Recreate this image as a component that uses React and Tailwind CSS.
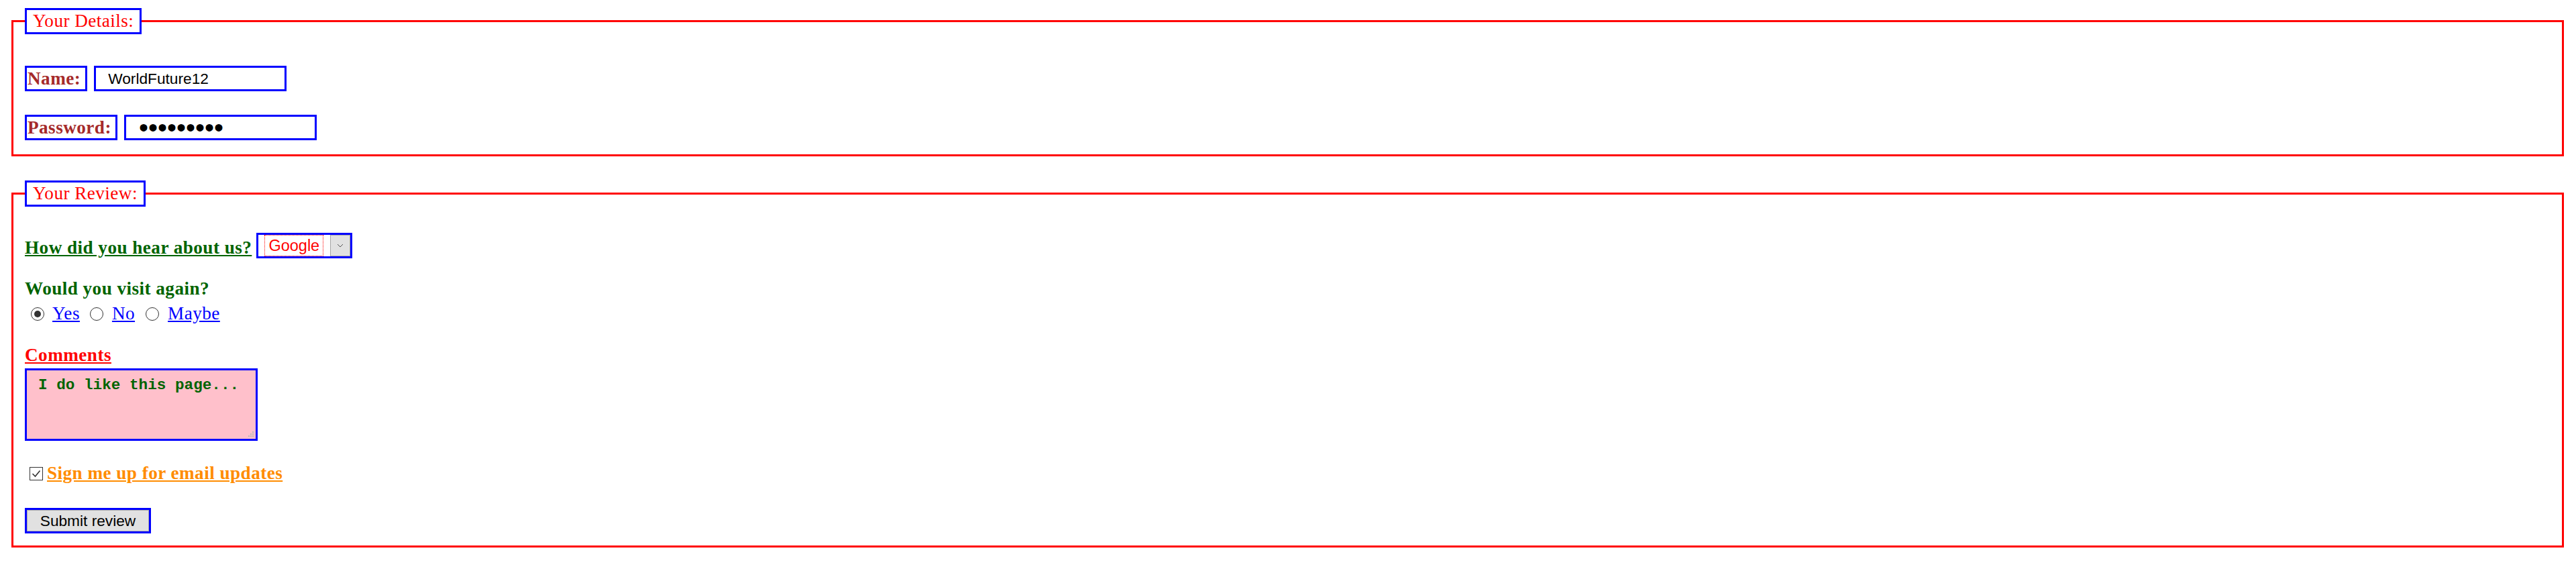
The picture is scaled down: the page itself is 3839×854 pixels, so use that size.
import React from 'react';

const sans = "font-['Liberation_Sans',Arial,sans-serif] tracking-normal";

const Radio = ({ checked }) => (
    <span className="flex h-[20px] w-[20px] shrink-0 items-center justify-center rounded-full border border-[#333333] bg-white">
        {checked && <span className="h-[10px] w-[10px] rounded-full bg-[#333333]" />}
    </span>
);

export default function App() {
    return (
        <div className="min-h-screen bg-white pt-[12px] pl-[17px] pr-[18px] font-['Liberation_Serif','Times_New_Roman',serif] text-[27.2px] leading-[31px] tracking-[0.45px] text-black">

            {/* Your Details */}
            <fieldset className="border-[3px] border-[#ff0000] px-[17px] pb-[21px]">
                <legend className="border-[3px] border-[#0000ff] px-[9px] leading-[33px] text-[#ff0000]">Your Details:</legend>

                <div className="mt-[47px] flex h-[38px]">
                    <label className="flex items-center border-[3px] border-[#0000ff] pl-[1px] pr-[7px] font-bold text-[#a52a2a]">Name:</label>
                    <input
                        type="text"
                        defaultValue="WorldFuture12"
                        className={`ml-[10px] h-[38px] w-[287px] border-[3px] border-[#0000ff] bg-white pl-[18px] text-[22.7px] text-black outline-none ${sans}`}
                    />
                </div>

                <div className="mt-[35px] flex h-[38px]">
                    <label className="flex items-center border-[3px] border-[#0000ff] pl-[1px] pr-[6px] font-bold text-[#a52a2a]">Password:</label>
                    <input
                        type="password"
                        defaultValue="secretpwd"
                        className={`ml-[10px] h-[38px] w-[287px] border-[3px] border-[#0000ff] bg-white pl-[19px] text-[40px] leading-[32px] text-black outline-none ${sans}`}
                    />
                </div>
            </fieldset>

            {/* Your Review */}
            <fieldset className="mt-[36px] border-[3px] border-[#ff0000] px-[17px] pb-[18px]">
                <legend className="border-[3px] border-[#0000ff] px-[9px] leading-[33px] text-[#ff0000]">Your Review:</legend>

                <div className="mt-[39px] flex items-start">
                    <label className="mt-[7px] font-bold text-[#006400] underline">How did you hear about us?</label>
                    <div className={`ml-[7px] flex h-[38px] w-[143px] border-[3px] border-[#0000ff] bg-white pl-[9px] ${sans}`}>
                        <span className="flex w-[88px] items-center justify-center border border-dotted border-[#ff0000] text-[23.5px] text-[#ff0000]">Google</span>
                        <span className="ml-auto flex w-[30px] items-center justify-center border border-[#a6a6a6] bg-[#e1e1e1]">
                            <svg width="10" height="6" viewBox="0 0 10 6">
                                <path d="M1 1l4 4 4-4" stroke="#555555" strokeWidth="1" fill="none" />
                            </svg>
                        </span>
                    </div>
                </div>

                <p className="mt-[30px] font-bold text-[#006400]">Would you visit again?</p>

                <div className="mt-[6px] flex h-[31px] items-center pl-[9px]">
                    <Radio checked />
                    <label className="ml-[12px] text-[#0000ff] underline">Yes</label>
                    <span className="ml-[15px]"><Radio /></span>
                    <label className="ml-[13px] text-[#0000ff] underline">No</label>
                    <span className="ml-[16px]"><Radio /></span>
                    <label className="ml-[13px] text-[#0000ff] underline">Maybe</label>
                </div>

                <p className="mt-[31px] font-bold text-[#ff0000] underline">Comments</p>

                <div className="relative mt-[4px] h-[108px] w-[347px]">
                    <textarea
                        defaultValue="I do like this page..."
                        className="block h-full w-full resize-none border-[3px] border-[#0000ff] bg-[#ffc0cb] pl-[17px] pt-[10px] font-['Liberation_Mono','Courier_New',monospace] text-[22.67px] font-bold leading-[25.7px] tracking-normal text-[#006400] outline-none"
                    />
                    <svg className="absolute bottom-[5px] right-[5px]" width="10" height="10" viewBox="0 0 10 10">
                        <rect x="7" y="1" width="2" height="2" fill="#b9b9b9" />
                        <rect x="4" y="4" width="2" height="2" fill="#b9b9b9" />
                        <rect x="7" y="4" width="2" height="2" fill="#b9b9b9" />
                        <rect x="1" y="7" width="2" height="2" fill="#b9b9b9" />
                        <rect x="4" y="7" width="2" height="2" fill="#b9b9b9" />
                        <rect x="7" y="7" width="2" height="2" fill="#b9b9b9" />
                    </svg>
                </div>

                <div className="mt-[33px] flex h-[31px] items-center pl-[7px]">
                    <span className="flex h-[20px] w-[20px] shrink-0 items-center justify-center border border-[#333333] bg-white">
                        <svg width="14" height="12" viewBox="0 0 14 12">
                            <path d="M1.5 6l4 4 7-8.5" stroke="#333333" strokeWidth="1.6" fill="none" />
                        </svg>
                    </span>
                    <label className="ml-[6px] font-bold text-[#ff8c00] underline">Sign me up for email updates</label>
                </div>

                <button className="mt-[36px] block h-[38px] w-[188px] border-[3px] border-[#0000ff] bg-white p-0">
                    <span className={`flex h-full w-full items-center justify-center border border-[#adadad] bg-[#e1e1e1] text-[22.7px] text-black ${sans} tracking-[0.4px]`}>
                        Submit review
                    </span>
                </button>
            </fieldset>
        </div>
    );
}
